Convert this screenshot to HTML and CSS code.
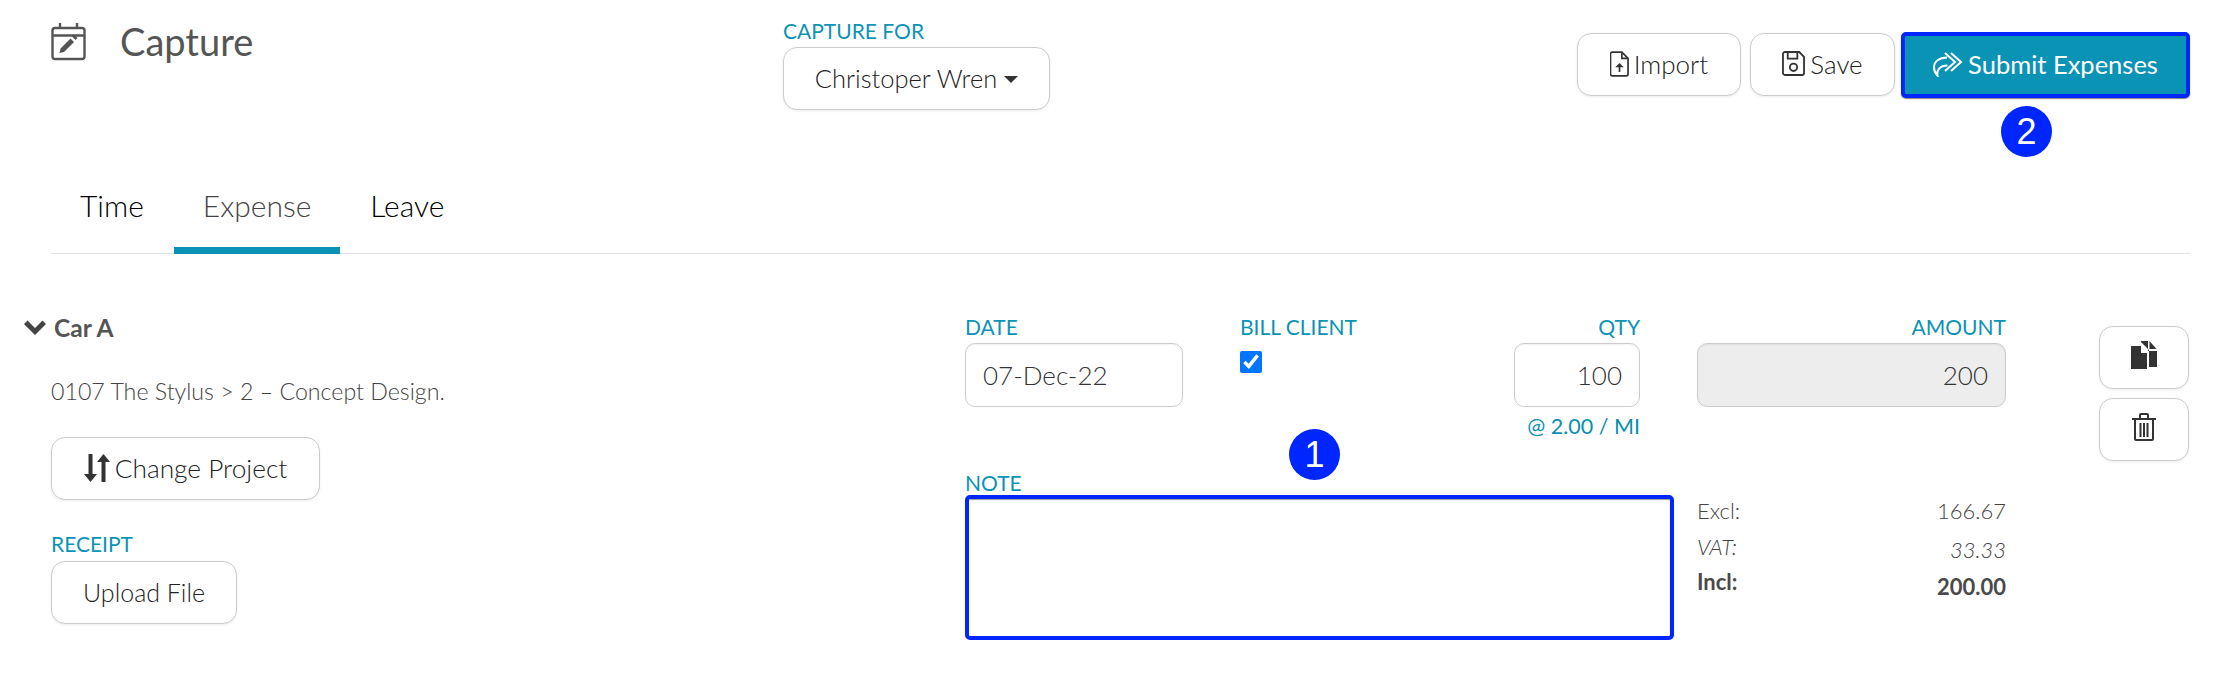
FILE: index.html
```html
<!DOCTYPE html>
<html lang="en">
<head>
  <meta charset="UTF-8">
  <meta name="viewport" content="width=device-width, initial-scale=1.0">
  <title>Capture</title>
  <link rel="stylesheet" href="styles.css">
</head>
<body>

  <div class="page">

    <!-- Header -->
    <div class="page-header">
      <div class="page-title">
        <svg class="title-icon" viewBox="0 0 36 38" width="36" height="38" fill="none" stroke="#555" stroke-width="2.4">
          <rect x="1.5" y="5" width="32" height="31" rx="2.5"/>
          <path d="M1.5 12.5h32M9 0v5M26 0v5"/>
          <path d="M8.5 30l1-4.500 10-10 3.500 3.500-10 10zM21 13.500l2-2 3.500 3.500-2 2z" fill="#555" stroke="none"/>
        </svg>
        <h1>Capture</h1>
      </div>
      <div class="capture-for">
        <label class="field-label">CAPTURE FOR</label>
        <button class="btn btn-select">Christoper Wren<span class="caret"></span></button>
      </div>
      <div class="header-actions">
        <button class="btn btn-import">
          <svg viewBox="0 0 20 27" width="19" height="26" fill="none" stroke="#333" stroke-width="1.800">
            <path d="M2.500 1h10l6.500 6.500v16.500a2 2 0 0 1-2 2h-14.500a2 2 0 0 1-2-2v-21a2 2 0 0 1 2-2z"/>
            <path d="M12.500 1v6.500h6.500M10 22v-6"/>
            <path d="M10 12.500l4.500 4.500h-9z" fill="#333" stroke="none"/>
          </svg>
          Import
        </button>
        <button class="btn btn-save">
          <svg viewBox="0 0 24 26" width="23" height="25" fill="none" stroke="#333" stroke-width="1.900">
            <path d="M3 1h15l5 5v17a2 2 0 0 1-2 2h-18a2 2 0 0 1-2-2v-20a2 2 0 0 1 2-2z"/>
            <path d="M6 1v7h10v-7"/>
            <circle cx="12" cy="17" r="3.800"/>
          </svg>
          Save
        </button>
        <div class="submit-wrap">
          <button class="btn btn-submit">
            <svg viewBox="0 0 30 26" width="30" height="26" fill="none" stroke="#fff" stroke-width="2">
              <path d="M18 2l10 9-10 9M12 2l10 9-10 9"/>
              <path d="M14 6.500c-8 0-13 4-13 10 0 3 1.500 6 3.500 8-1-5 2-10 10-10"/>
            </svg>
            Submit Expenses
          </button>
          <span class="badge badge-submit">2</span>
        </div>
      </div>
    </div>

    <!-- Tabs -->
    <div class="tabs">
      <a href="#" class="tab">Time</a>
      <a href="#" class="tab active">Expense</a>
      <a href="#" class="tab">Leave</a>
    </div>

    <!-- Expense entry -->
    <div class="entry">
      <div class="entry-info">
        <div class="entry-name">
          <svg viewBox="0 0 22 16" width="22" height="16" fill="#444">
            <path d="M0 4l3.500-3.500 7.500 7.500 7.500-7.500 3.500 3.500-11 11z"/>
          </svg>
          Car A
        </div>
        <p class="entry-project">0107 The Stylus &gt; 2 &ndash; Concept Design.</p>
        <button class="btn btn-change">
          <svg viewBox="0 0 26 28" width="26" height="28" fill="#333">
            <path d="M4.500 0h4v20h4.500l-6.500 8-6.500-8h4.500z"/>
            <path d="M17.500 28h4v-20h4.500l-6.500-8-6.500 8h4.500z"/>
          </svg>
          Change Project
        </button>
        <label class="field-label receipt-label">RECEIPT</label>
        <button class="btn btn-upload">Upload File</button>
      </div>

      <div class="entry-form">
        <div class="form-row">
          <div class="field field-date">
            <label class="field-label">DATE</label>
            <input type="text" class="input" value="07-Dec-22">
          </div>
          <div class="field field-bill">
            <label class="field-label">BILL CLIENT</label>
            <input type="checkbox" class="bill-check" checked>
          </div>
          <div class="field field-qty">
            <label class="field-label">QTY</label>
            <input type="text" class="input" value="100">
            <div class="rate">@ 2.00 / MI</div>
          </div>
          <div class="field field-amount">
            <label class="field-label">AMOUNT</label>
            <input type="text" class="input" value="200" disabled>
          </div>
        </div>
        <div class="form-row note-row">
          <div class="field field-note">
            <label class="field-label">NOTE</label>
            <textarea class="note"></textarea>
            <span class="badge badge-note">1</span>
          </div>
          <div class="totals">
            <div class="total-row"><span>Excl:</span><span>166.67</span></div>
            <div class="total-row total-vat"><span>VAT:</span><span class="total-val">33.33</span></div>
            <div class="total-row total-incl"><span>Incl:</span><span class="total-val">200.00</span></div>
          </div>
        </div>
      </div>

      <div class="entry-actions">
        <button class="btn btn-icon">
          <svg viewBox="0 0 26 28" width="26" height="28" fill="#333">
            <path d="M0 5h10v7h6v16h-16z"/>
            <path d="M10 0h7v10h9v16h-8v-17l-8-8z"/>
            <path d="M18.500 0l7 8h-7z"/>
          </svg>
        </button>
        <button class="btn btn-icon">
          <svg viewBox="0 0 24 28" width="24" height="28" fill="none" stroke="#333" stroke-width="2">
            <path d="M0 6h24M8 6v-4a1 1 0 0 1 1-1h6a1 1 0 0 1 1 1v4"/>
            <path d="M3 6v20a1 1 0 0 0 1 1h16a1 1 0 0 0 1-1v-20M8.500 10v14M12 10v14M15.500 10v14"/>
          </svg>
        </button>
      </div>
    </div>

  </div>

</body>
</html>
```

FILE: styles.css
```css
/* Common styles */
body {
  margin: 0;
  font-family: "Lato", "Open Sans", sans-serif;
  color: #444;
  background-color: #fff;
}

.page {
  padding: 0 48px 0 51px;
}

.btn {
  display: inline-flex;
  align-items: center;
  justify-content: center;
  gap: 5px;
  height: 63px;
  padding: 0 0 2px;
  background-color: #fff;
  border: 1px solid #ccc;
  border-radius: 14px;
  box-shadow: 0 1px 3px rgba(0, 0, 0, 0.08);
  font-family: inherit;
  font-size: 26px;
  font-weight: 300;
  color: #222;
  cursor: pointer;
}

.field-label {
  display: block;
  font-size: 21px;
  line-height: 26px;
  color: #0b93b6;
}

/* Header styles */
.page-header {
  display: flex;
  align-items: flex-start;
  height: 177px;
}

.page-title {
  display: flex;
  align-items: center;
  width: 732px;
  padding-top: 21px;
}

.title-icon {
  margin: 2px 33px 0 0;
}

.page-title h1 {
  margin: 0;
  font-size: 38px;
  line-height: 40px;
  font-weight: 400;
  color: #555;
}

.capture-for {
  padding-top: 18px;
}

.btn-select {
  width: 267px;
  margin-top: 3px;
  font-size: 25.5px;
}

.caret {
  width: 0;
  height: 0;
  margin-left: 2px;
  margin-top: 4px;
  border-left: 7px solid transparent;
  border-right: 7px solid transparent;
  border-top: 7px solid #333;
}

.header-actions {
  display: flex;
  align-items: flex-start;
  gap: 9px;
  margin-left: auto;
  padding-top: 33px;
}

.btn-import {
  width: 164px;
}

.btn-save {
  width: 145px;
}

.submit-wrap {
  position: relative;
  margin-top: -1px;
  margin-left: -3px;
}

.btn-submit {
  width: 289px;
  height: 66px;
  padding-bottom: 3px;
  background-color: #0b93b6;
  border: 4px solid #0026ff;
  border-radius: 5px;
  box-shadow: 0 1px 1px rgba(0, 0, 0, 0.5);
  color: #fff;
  font-size: 25.5px;
  font-weight: 400;
}

.badge {
  position: absolute;
  display: flex;
  align-items: center;
  justify-content: center;
  width: 51px;
  height: 51px;
  border-radius: 50%;
  background-color: #0026ff;
  color: #fff;
  font-family: "Liberation Sans", Arial, sans-serif;
  font-size: 36px;
}

.badge-submit {
  top: 74px;
  left: 100px;
}

.badge-note {
  top: -41px;
  left: 324px;
}

/* Tabs */
.tabs {
  display: flex;
  gap: 1px;
  border-bottom: 1px solid #dee2e6;
}

.tab {
  padding: 11px 29px 25px;
  margin-bottom: -1px;
  border-bottom: 7px solid transparent;
  font-size: 30px;
  line-height: 34px;
  font-weight: 300;
  color: #000;
  text-decoration: none;
}

.tab.active {
  color: #444;
  border-bottom-color: #0b93b6;
}

/* Expense entry */
.entry {
  display: flex;
  padding-top: 60px;
}

.entry-info {
  width: 914px;
}

.entry-name {
  display: flex;
  align-items: center;
  gap: 8px;
  margin: -1px 0 0 -27px;
  font-size: 24.5px;
  line-height: 30px;
  font-weight: 700;
  color: #555;
}

.entry-project {
  margin: 33px 0 0;
  font-size: 23.2px;
  line-height: 30px;
  font-weight: 300;
}

.btn-change {
  display: flex;
  width: 269px;
  margin-top: 31px;
  font-size: 26.3px;
}

.receipt-label {
  margin-top: 31px;
}

.btn-upload {
  display: flex;
  width: 186px;
  margin-top: 4px;
  font-size: 25px;
}

.entry-form {
  width: 1041px;
}

.form-row {
  display: flex;
}

.field {
  position: relative;
}

.field-date {
  width: 218px;
  margin-right: 57px;
}

.field-bill {
  width: 274px;
}

.field-qty {
  width: 126px;
  margin-right: 57px;
  text-align: right;
}

.field-amount {
  width: 309px;
  text-align: right;
}

.input {
  display: block;
  box-sizing: border-box;
  width: 100%;
  height: 64px;
  margin-top: 3px;
  padding: 0 17px;
  background-color: #fff;
  border: 1px solid #ccc;
  border-radius: 10px;
  box-shadow: inset 0 1px 2px rgba(0, 0, 0, 0.06);
  font-family: inherit;
  font-size: 26px;
  font-weight: 300;
  color: #333;
}

.field-qty .input,
.field-amount .input {
  text-align: right;
}

.input:disabled {
  background-color: #ededed;
  color: #333;
}

.bill-check {
  display: block;
  width: 22px;
  height: 22px;
  margin: 11px 0 0;
  accent-color: #0075ff;
}

.rate {
  margin-top: 6px;
  font-size: 21.5px;
  line-height: 26px;
  color: #0b8fb0;
}

.note-row {
  margin-top: 31px;
}

.field-note {
  width: 709px;
  margin-right: 23px;
}

.note {
  display: block;
  box-sizing: border-box;
  width: 100%;
  height: 145px;
  margin-top: -1px;
  background-color: #fff;
  border: 4px solid #0026ff;
  border-radius: 5px;
  box-shadow: inset 0 1px 1px rgba(0, 0, 0, 0.4);
  resize: none;
}

.totals {
  width: 309px;
  padding-top: 23px;
}

.total-row {
  display: flex;
  justify-content: space-between;
  font-size: 22px;
  line-height: 35.5px;
  font-weight: 300;
}

.total-vat {
  font-style: italic;
}

.total-vat .total-val {
  position: relative;
  top: 3px;
}

.total-incl {
  font-weight: 700;
  color: #4a4a4a;
}

.total-incl .total-val {
  position: relative;
  top: 5px;
}

/* Row actions */
.entry-actions {
  display: flex;
  flex-direction: column;
  gap: 9px;
  margin-left: 93px;
  padding-top: 12px;
}

.btn-icon {
  width: 90px;
  padding-bottom: 5px;
}
```
